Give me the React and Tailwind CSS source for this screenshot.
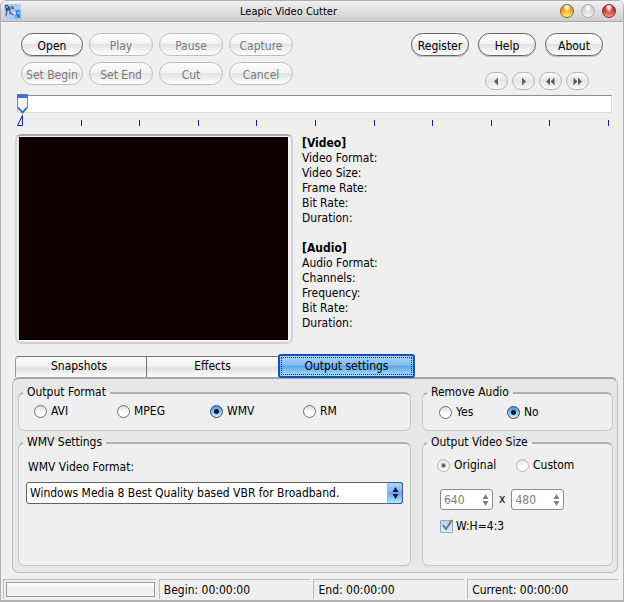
import { useState } from "react";

const pillBase =
  "h-[23px] rounded-full border bg-[linear-gradient(#fdfdfd_0%,#f3f3f3_45%,#e2e2e2_50%,#f1f1f1_75%,#ffffff_100%)] pt-px text-center leading-[22px] whitespace-nowrap";

function PillButton({ children, disabled = false, className = "" }) {
  const tone = disabled
    ? "border-[#bdbdbd] text-[#7b7b7b]"
    : "border-[#666666] text-black shadow-[0_1px_1px_#bbbbbb]";
  return (
    <button type="button" disabled={disabled} className={`${pillBase} ${tone} ${className}`}>
      {children}
    </button>
  );
}

function NavButton({ label, points }) {
  return (
    <button
      type="button"
      aria-label={label}
      className="flex h-[18px] w-[23px] items-center justify-center rounded-full border border-[#b5b5b5] bg-[linear-gradient(#fdfdfd,#e4e4e4_50%,#fafafa)]"
    >
      <svg width="11" height="9" viewBox="0 0 11 9" fill="#606060" aria-hidden="true">
        {points.map((p) => (
          <polygon key={p} points={p} />
        ))}
      </svg>
    </button>
  );
}

function Radio({ id, name, label, defaultChecked = false, disabled = false }) {
  return (
    <div className="flex items-center gap-1">
      <input
        id={id}
        type="radio"
        name={name}
        defaultChecked={defaultChecked}
        disabled={disabled}
        className="size-[13px] shrink-0 appearance-none rounded-full border border-[#6f6f6f] bg-[linear-gradient(#dedede,#ffffff_60%)] enabled:checked:border-[#2c4a78] enabled:checked:bg-[radial-gradient(circle,#08152c_0_2px,transparent_3px),linear-gradient(#5b8fd6,#8ec0f4_50%,#d3f2ff)] disabled:border-[#b4b4b4] disabled:checked:bg-[radial-gradient(circle,#5e5e5e_0_1px,transparent_3px),linear-gradient(#e6e6e6,#ffffff)]"
      />
      <label htmlFor={id} className="whitespace-nowrap">
        {label}
      </label>
    </div>
  );
}

function Group({ title, className = "", children }) {
  return (
    <fieldset
      className={`min-w-0 rounded-[6px] border border-t-2 border-[#c6c6c6] border-t-[#b0b0b0] bg-[#efefef] ${className}`}
    >
      <legend className="ml-1 px-1 leading-[15px]">{title}</legend>
      {children}
    </fieldset>
  );
}

function SizeInput({ label, value }) {
  return (
    <div className="relative w-[53px]">
      <input
        type="number"
        aria-label={label}
        defaultValue={value}
        disabled
        className="block h-[21px] w-full appearance-none rounded-[3px] border border-[#8a8a8a] bg-white pl-[3px] text-[#808080] [-moz-appearance:textfield] [&::-webkit-inner-spin-button]:appearance-none"
      />
      <svg
        className="pointer-events-none absolute top-[5px] right-[4px]"
        width="7"
        height="12"
        viewBox="0 0 7 12"
        fill="#808080"
        aria-hidden="true"
      >
        <polygon points="3.5,0 6.5,5 0.5,5" />
        <polygon points="0.5,7 6.5,7 3.5,12" />
      </svg>
    </div>
  );
}

function WindowButton({ label, className }) {
  return (
    <button
      type="button"
      aria-label={label}
      className={`size-[14px] rounded-full border ${className}`}
    />
  );
}

function StatusCell({ children, className = "" }) {
  return (
    <div
      className={`h-5 border-t border-l border-[#bcbcbc] pl-1 leading-5 whitespace-nowrap ${className}`}
    >
      {children}
    </div>
  );
}

const ticks = [1, 2, 3, 4, 5, 6, 7, 8, 9, 10];
const videoInfo = ["Video Format:", "Video Size:", "Frame Rate:", "Bit Rate:", "Duration:"];
const audioInfo = ["Audio Format:", "Channels:", "Frequency:", "Bit Rate:", "Duration:"];

function InfoList({ title, items }) {
  return (
    <section>
      <h2 className="font-bold">{title}</h2>
      <ul>
        {items.map((item) => (
          <li key={item}>{item}</li>
        ))}
      </ul>
    </section>
  );
}

export default function App() {
  const [position, setPosition] = useState(0);

  return (
    <div className="flex min-h-screen flex-col overflow-hidden rounded-t-[6px] border border-b-2 border-[#b0b0b0] bg-[#efefef] font-['DejaVu_Sans_Condensed','DejaVu_Sans',sans-serif] text-[12px] leading-[15px] text-black">
      <header className="grid h-[21px] grid-cols-[auto_1fr_auto] items-center border-b border-[#a9a9a9] bg-[linear-gradient(#f1f1f1,#cccccc)] px-[3px]">
        <svg width="17" height="15" viewBox="0 0 17 15" aria-hidden="true">
          <rect width="17" height="15" fill="#a9cdf3" />
          <rect x="10" y="6" width="7" height="9" fill="#78b4f2" />
          <path d="M1 1h3l1 2 4-1 1 3-4 0-2 2H2z" fill="#3b5065" />
          <path d="M3 6l-1 6M6 5v5M6 9l4 2" stroke="#4b5f73" strokeWidth="1.200" />
          <path d="M2 3h2M6 4h2" stroke="#dcecff" />
          <path d="M15 6l-4 3 4 3" stroke="#276fca" strokeWidth="1.500" fill="none" />
          <circle cx="10.500" cy="9" r="1.500" fill="#e1efff" />
          <circle cx="14.500" cy="12" r="1.500" fill="#2c73cb" />
        </svg>
        <h1 className="pr-1 text-center text-[11px]">Leapic Video Cutter</h1>
        <div className="flex justify-end gap-[7px] pr-1">
          <WindowButton
            label="Minimize"
            className="border-[#8b5a24] bg-[radial-gradient(ellipse_at_50%_15%,#fff3cf_0_15%,transparent_45%),linear-gradient(#e3862a,#f4a422_50%,#ffff72)]"
          />
          <WindowButton
            label="Maximize"
            className="border-[#a5a5a5] bg-[radial-gradient(ellipse_at_50%_15%,#ffffff_0_15%,transparent_45%),linear-gradient(#bcbcbc,#d6d6d6_50%,#fafafa)]"
          />
          <WindowButton
            label="Close"
            className="border-[#792b2b] bg-[radial-gradient(ellipse_at_50%_15%,#ffe2dc_0_15%,transparent_45%),linear-gradient(#a92d30,#c93d3d_50%,#ff9c88)]"
          />
        </div>
      </header>

      <div className="flex items-start justify-between pt-[11px] pr-5 pl-5">
        <div className="grid grid-cols-[62px_64px_64px_64px] gap-x-[6px] gap-y-[6px]">
          <PillButton>Open</PillButton>
          <PillButton disabled>Play</PillButton>
          <PillButton disabled>Pause</PillButton>
          <PillButton disabled>Capture</PillButton>
          <PillButton disabled>Set Begin</PillButton>
          <PillButton disabled>Set End</PillButton>
          <PillButton disabled>Cut</PillButton>
          <PillButton disabled>Cancel</PillButton>
        </div>
        <div className="flex flex-col items-end gap-4">
          <div className="flex gap-[9px]">
            <PillButton className="w-[58px]">Register</PillButton>
            <PillButton className="w-[58px]">Help</PillButton>
            <PillButton className="w-[58px]">About</PillButton>
          </div>
          <div className="flex gap-1 pr-[14px]">
            <NavButton label="Step back" points={["7,0.5 7,8.5 3,4.5"]} />
            <NavButton label="Step forward" points={["4,0.5 4,8.5 8,4.5"]} />
            <NavButton label="Rewind" points={["5,0.5 5,8.5 1,4.5", "9.5,0.5 9.5,8.5 5.5,4.5"]} />
            <NavButton
              label="Fast forward"
              points={["1.5,0.5 1.5,8.5 5.5,4.5", "6,0.5 6,8.5 10,4.5"]}
            />
          </div>
        </div>
      </div>

      <div className="mt-[5px] pr-[11px] pl-4">
        <div className="relative h-[18px]">
          <input
            type="range"
            aria-label="Position"
            min="0"
            max="100"
            value={position}
            onChange={(e) => setPosition(Number(e.target.value))}
            className="block h-[18px] w-full appearance-none border border-t-[#8c8c8c] border-r-[#dcdcdc] border-b-[#dcdcdc] border-l-[#bbbbbb] bg-white [&::-webkit-slider-thumb]:h-4 [&::-webkit-slider-thumb]:w-3 [&::-webkit-slider-thumb]:appearance-none"
          />
          <div
            className="pointer-events-none absolute -top-px"
            style={{ left: `calc((100% - 11px) * ${position / 100})` }}
          >
            <svg width="11" height="20" viewBox="0 0 11 20" aria-hidden="true">
              <path d="M0.5 0.5h10v13l-5 5.500-5-5.500z" fill="#f5f6f3" stroke="#7289a3" />
              <path d="M0 0h11v4H0z" fill="#3c79c6" />
              <path d="M1 13.500l4.500 5 4.500-5" fill="none" stroke="#2d67af" strokeWidth="1.800" />
            </svg>
          </div>
        </div>
        <div className="mt-[2px] flex h-[11px] items-end justify-between pr-[3px]" aria-hidden="true">
          <svg width="6" height="11" viewBox="0 0 6 11">
            <path d="M5.500 0.500v10h-5z" fill="none" stroke="#1717a6" />
          </svg>
          {ticks.map((t) => (
            <span key={t} className="flex w-px grow justify-end">
              <span className="h-[6px] w-px bg-[#1717c0]" />
            </span>
          ))}
        </div>
      </div>

      <div className="flex gap-[9px] pt-2 pl-[14px]">
        <div className="h-[210px] w-[278px] rounded-[6px] border-2 border-[#d3d3d3] border-t-[#a9a9a9] bg-[#f3f3f3] p-px">
          <div className="h-[203px] w-[270px] border-l border-[#dddddd] bg-[#0e0000]" />
        </div>
        <div className="flex flex-col gap-[15px] pt-[2px]">
          <InfoList title="[Video]" items={videoInfo} />
          <InfoList title="[Audio]" items={audioInfo} />
        </div>
      </div>

      <main className="flex grow flex-col pt-[10px] pr-[5px] pl-[11px]">
        <div role="tablist" className="flex items-center pl-[3px]">
          <button
            type="button"
            role="tab"
            aria-selected="false"
            className="mt-px h-[21px] w-[131px] rounded-tl-[4px] border border-r-0 border-b-0 border-[#737373] border-l-[#999999] bg-[linear-gradient(#fafafa,#f2f2f2_45%,#e0e0e0_55%,#ffffff)] pr-1"
          >
            Snapshots
          </button>
          <button
            type="button"
            role="tab"
            aria-selected="false"
            className="mt-px h-[21px] w-[132px] border border-r-0 border-b-0 border-[#737373] bg-[linear-gradient(#fafafa,#f2f2f2_45%,#e0e0e0_55%,#ffffff)]"
          >
            Effects
          </button>
          <button
            type="button"
            role="tab"
            aria-selected="true"
            className="z-10 -mb-px h-6 w-[137px] rounded-[3px] border-2 border-[#1650b9] bg-[linear-gradient(#aed7fb,#7fb9f4_45%,#60a4ea_52%,#a9e3fd)] p-px"
          >
            <span className="block h-[18px] border border-dotted border-[#1c355a] leading-[16px]">
              Output settings
            </span>
          </button>
        </div>

        <div
          role="tabpanel"
          className="grid grow grid-cols-[minmax(0,1fr)_191px] grid-rows-[46px_1fr] gap-x-[11px] gap-y-1 rounded-[7px] border border-t-2 border-[#bcbcbc] border-t-[#a5a5a5] bg-[#e7e7e7] pt-[6px] pr-1 pb-[6px] pl-[5px]"
        >
          <Group title="Output Format">
            <div className="grid grid-cols-[83px_93px_93px_auto] pt-1 pl-[15px]">
              <Radio id="fmt-avi" name="format" label="AVI" />
              <Radio id="fmt-mpeg" name="format" label="MPEG" />
              <Radio id="fmt-wmv" name="format" label="WMV" defaultChecked />
              <Radio id="fmt-rm" name="format" label="RM" />
            </div>
          </Group>

          <Group title="Remove Audio">
            <div className="grid grid-cols-[68px_auto] pt-[5px] pl-4">
              <Radio id="audio-yes" name="remove-audio" label="Yes" />
              <Radio id="audio-no" name="remove-audio" label="No" defaultChecked />
            </div>
          </Group>

          <Group title="WMV Settings">
            <div className="pt-[10px] pr-[7px] pl-[7px]">
              <label htmlFor="wmv-format" className="block pl-[2px]">
                WMV Video Format:
              </label>
              <div className="relative mt-[7px]">
                <select
                  id="wmv-format"
                  className="block h-[22px] w-full appearance-none rounded-[3px] border border-[#616161] bg-white pr-5 pl-[3px]"
                >
                  <option>Windows Media 8 Best Quality based VBR for Broadband.</option>
                </select>
                <span className="pointer-events-none absolute inset-y-0 right-0 flex w-4 items-center justify-center rounded-r-[3px] border border-[#2d5f9e] border-l-[#94bce8] bg-[linear-gradient(#b5d6f8,#7db4f0_45%,#62a3e8_50%,#b4ecff)]">
                  <svg width="7" height="12" viewBox="0 0 7 12" fill="#0d1c30" aria-hidden="true">
                    <polygon points="3.5,0 6.5,5 0.5,5" />
                    <polygon points="0.5,7 6.5,7 3.5,12" />
                  </svg>
                </span>
              </div>
            </div>
          </Group>

          <Group title="Output Video Size">
            <div className="grid grid-cols-[79px_auto] pt-2 pl-[14px]">
              <Radio id="size-original" name="size" label="Original" defaultChecked disabled />
              <Radio id="size-custom" name="size" label="Custom" disabled />
            </div>
            <div className="flex items-center gap-[6px] pt-4 pl-[17px]">
              <SizeInput label="Width" value="640" />
              <span>x</span>
              <SizeInput label="Height" value="480" />
            </div>
            <div className="flex items-center gap-[3px] pt-[9px] pl-[17px]">
              <span className="relative size-[13px]">
                <input
                  id="keep-ratio"
                  type="checkbox"
                  defaultChecked
                  disabled
                  className="block size-[13px] appearance-none rounded-[1px] border border-[#8fa5bd] bg-[linear-gradient(#b9d3ee,#d9f1fc)]"
                />
                <svg
                  className="pointer-events-none absolute -top-px left-px"
                  width="12"
                  height="12"
                  viewBox="0 0 12 12"
                  aria-hidden="true"
                >
                  <path d="M2 6l3 4L11 1" fill="none" stroke="#6b7784" strokeWidth="2" />
                </svg>
              </span>
              <label htmlFor="keep-ratio">W:H=4:3</label>
            </div>
          </Group>
        </div>
      </main>

      <footer className="mt-[6px] mb-px grid grid-cols-[153fr_152fr_151fr_151fr] gap-x-[3px] pr-[5px] pl-[2px]">
        <div className="h-5 border-t border-l border-[#bcbcbc] pt-[2px] pr-px pl-[2px]">
          <div
            role="progressbar"
            aria-label="Progress"
            aria-valuenow="0"
            className="h-[15px] border border-[#999999] bg-[linear-gradient(#ffffff,#ececec_50%,#f6f6f6)]"
          />
        </div>
        <StatusCell>Begin: 00:00:00</StatusCell>
        <StatusCell>End: 00:00:00</StatusCell>
        <StatusCell>Current: 00:00:00</StatusCell>
      </footer>
    </div>
  );
}
